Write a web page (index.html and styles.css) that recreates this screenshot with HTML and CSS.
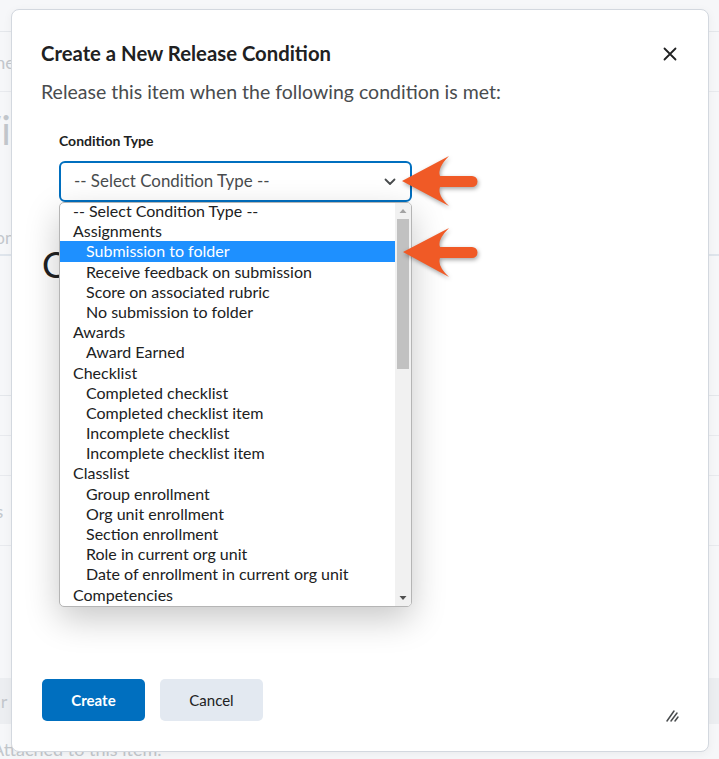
FILE: index.html
```html
<!DOCTYPE html>
<html lang="en">
<head>
<meta charset="utf-8">
<title>Create a New Release Condition</title>
<link rel="stylesheet" href="styles.css">
</head>
<body>
<div class="page">
  <div class="page-top"></div>
  <div class="page-row r-name"><span class="faint">Name</span></div>
  <div class="page-row r-big"><span class="faint big">Wiki</span></div>
  <div class="page-row r-tabs"><span class="faint tab">Option</span></div>
  <div class="page-row r-gap"></div>
  <div class="page-row r-line"></div>
  <div class="page-row r-line"></div>
  <div class="page-row r-s"><span class="faint">Sets</span></div>
  <div class="page-row r-gap2"></div>
  <div class="page-row r-btn"><span class="faint">Clear</span></div>
  <div class="page-row r-foot"><span class="faint">Attached to this item.</span></div>
</div>

<div class="dialog">
  <div class="header">
    <h1 class="title">Create a New Release Condition</h1>
    <svg class="close" width="14" height="14" viewBox="0 0 14 14"><path d="M1.5 1.5 L12.5 12.5 M12.5 1.5 L1.5 12.5" stroke="#202122" stroke-width="1.8" stroke-linecap="round"/></svg>
  </div>
  <p class="subtitle">Release this item when the following condition is met:</p>

  <div class="field">
    <div class="label">Condition Type</div>
    <div class="select">
      <span>-- Select Condition Type --</span>
      <svg class="chev" width="12" height="8" viewBox="0 0 12 8"><path d="M1.5 1.5 L6 6 L10.5 1.5" fill="none" stroke="#494c4e" stroke-width="1.8" stroke-linecap="round" stroke-linejoin="round"/></svg>
    </div>
    <div class="listbox">
      <div class="options">
        <div class="opt grp">-- Select Condition Type --</div>
        <div class="opt grp">Assignments</div>
        <div class="opt sub sel">Submission to folder</div>
        <div class="opt sub">Receive feedback on submission</div>
        <div class="opt sub">Score on associated rubric</div>
        <div class="opt sub">No submission to folder</div>
        <div class="opt grp">Awards</div>
        <div class="opt sub">Award Earned</div>
        <div class="opt grp">Checklist</div>
        <div class="opt sub">Completed checklist</div>
        <div class="opt sub">Completed checklist item</div>
        <div class="opt sub">Incomplete checklist</div>
        <div class="opt sub">Incomplete checklist item</div>
        <div class="opt grp">Classlist</div>
        <div class="opt sub">Group enrollment</div>
        <div class="opt sub">Org unit enrollment</div>
        <div class="opt sub">Section enrollment</div>
        <div class="opt sub">Role in current org unit</div>
        <div class="opt sub">Date of enrollment in current org unit</div>
        <div class="opt grp">Competencies</div>
      </div>
      <div class="scrollbar">
        <svg class="sb-arrow" width="16" height="16" viewBox="0 0 16 16"><path d="M4.5 10 L8 6 L11.5 10 Z" fill="#a3a3a3"/></svg>
        <div class="thumb-wrap"><div class="thumb"></div></div>
        <svg class="sb-arrow" width="16" height="16" viewBox="0 0 16 16"><path d="M4.5 6 L8 10 L11.5 6 Z" fill="#505050"/></svg>
      </div>
    </div>
  </div>

  <h2 class="section">Conditions</h2>

  <div class="footer">
    <button class="btn primary">Create</button>
    <button class="btn secondary">Cancel</button>
  </div>
  <svg class="resize" width="16" height="16" viewBox="0 0 16 16"><path d="M3 14 L10 4 M7 14 L13 6 M11 14 L14 10" stroke="#494c4e" stroke-width="1.5" stroke-linecap="round"/></svg>
</div>

<svg class="arrows" width="719" height="759" viewBox="0 0 719 759">
  <path d="M402 181 L449 156 Q437 168 440 176 L472 176 A5.5 5.5 0 0 1 472 187 L440 187 Q437 195 449 206 Z" fill="#f05a26"/>
  <path d="M403 252 L449 228 Q437 240 440 247 L472 247 A5.5 5.5 0 0 1 472 258 L440 258 Q437 266 449 277 Z" fill="#f05a26"/>
</svg>
</body>
</html>
```

FILE: styles.css
```css
* { box-sizing: border-box; }

body {
  margin: 0;
  width: 719px;
  height: 759px;
  overflow: hidden;
  position: relative;
  background: #f6f7f9;
  font-family: Lato, "Noto Sans", sans-serif;
  color: #202122;
}

/* faint page behind the dialog */
.page {
  display: flex;
  flex-direction: column;
  width: 719px;
}
.page-top { height: 32px; border-bottom: 1px solid #e4e7eb; }
.page-row { border-bottom: 1px solid #e8eaee; display: flex; align-items: center; }
.faint { color: #c3c7cc; font-size: 18px; white-space: nowrap; }
.r-name { height: 60px; margin-left: -32px; }
.r-big { height: 76px; margin-left: -40px; border-bottom: none; }
.big { font-size: 40px; }
.r-tabs { height: 88px; margin-left: -38px; align-items: flex-end; border-bottom: 2px solid #dfe5ec; }
.tab { padding-bottom: 6px; font-size: 17px; }
.r-gap { height: 140px; border-bottom: 1px solid #e4e7eb; }
.r-line { height: 40px; }
.r-s { height: 70px; margin-left: -30px; }
.r-gap2 { height: 132px; border-bottom: none; }
.r-btn { height: 46px; margin-left: -34px; background: #eceef1; border-bottom: none; }
.r-foot { height: 40px; margin-left: -8px; border-bottom: none; align-items: flex-start; padding-top: 14px; }

/* dialog */
.dialog {
  position: absolute;
  left: 11px;
  top: 9px;
  width: 698px;
  height: 743px;
  background: #fff;
  border: 1px solid #d3d8df;
  border-radius: 8px;
  box-shadow: 0 2px 10px rgba(0, 0, 0, 0.05);
  padding: 30px 29px 30px 29px;
  display: flex;
  flex-direction: column;
}

.header {
  display: flex;
  align-items: center;
  justify-content: space-between;
  height: 26px;
}
.title {
  margin: 0;
  font-size: 20.3px;
  line-height: 26px;
  font-weight: 700;
  color: #202122;
}
.close { margin-right: 2px; margin-top: 2px; }

.subtitle {
  margin: 12px 0 0 0;
  font-size: 19.5px;
  line-height: 28px;
  color: #494c4e;
}

.field {
  margin-top: 25px;
  padding-left: 18px;
  position: relative;
}
.label {
  font-size: 14px;
  line-height: 20px;
  font-weight: 700;
  color: #202122;
}
.select {
  margin-top: 10px;
  width: 353px;
  height: 41px;
  border: 2px solid #006fbf;
  border-radius: 6px;
  display: flex;
  align-items: center;
  justify-content: space-between;
  padding: 0 14px 0 13px;
  font-size: 16.9px;
  color: #494c4e;
}
.select span { margin-top: -2px; }
.chev { margin-top: 1px; }

.listbox {
  position: absolute;
  left: 18px;
  top: 71px;
  width: 353px;
  height: 405px;
  background: #fff;
  border: 1px solid #b5b5b5;
  border-radius: 5px;
  overflow: hidden;
  display: flex;
  box-shadow: 0 12px 34px rgba(0, 0, 0, 0.22);
  z-index: 2;
}
.options {
  flex: 1;
  margin-top: -2px;
}
.opt {
  height: 20.2px;
  line-height: 20.2px;
  font-size: 16px;
  color: #202122;
  white-space: nowrap;
}
.grp { padding-left: 13px; }
.sub { padding-left: 26px; }
.sel { background: #1e90ff; color: #fff; }

.scrollbar {
  width: 16px;
  background: #f1f1f1;
  display: flex;
  flex-direction: column;
}
.sb-arrow { display: block; flex: none; }
.thumb-wrap { flex: 1; padding: 0 2px 0 2px; }
.thumb {
  height: 150px;
  background: #c1c1c1;
}

.section {
  margin: 40px 0 0 1px;
  font-size: 36px;
  line-height: 44px;
  font-weight: 400;
  color: #202122;
}

.footer {
  margin-top: auto;
  display: flex;
  gap: 15px;
  padding-left: 1px;
}
.btn {
  width: 103px;
  height: 42px;
  border: none;
  border-radius: 5px;
  font-family: Lato, "Noto Sans", sans-serif;
  font-size: 15px;
}
.primary { background: #006fbf; color: #fff; font-weight: 700; }
.secondary { background: #e3e9f1; color: #202122; font-weight: 400; }

.resize {
  position: absolute;
  right: 28px;
  bottom: 28px;
}

.arrows {
  position: absolute;
  left: 0;
  top: 0;
  pointer-events: none;
  z-index: 5;
  filter: drop-shadow(1px 2px 2px rgba(0, 0, 0, 0.35));
}
```
